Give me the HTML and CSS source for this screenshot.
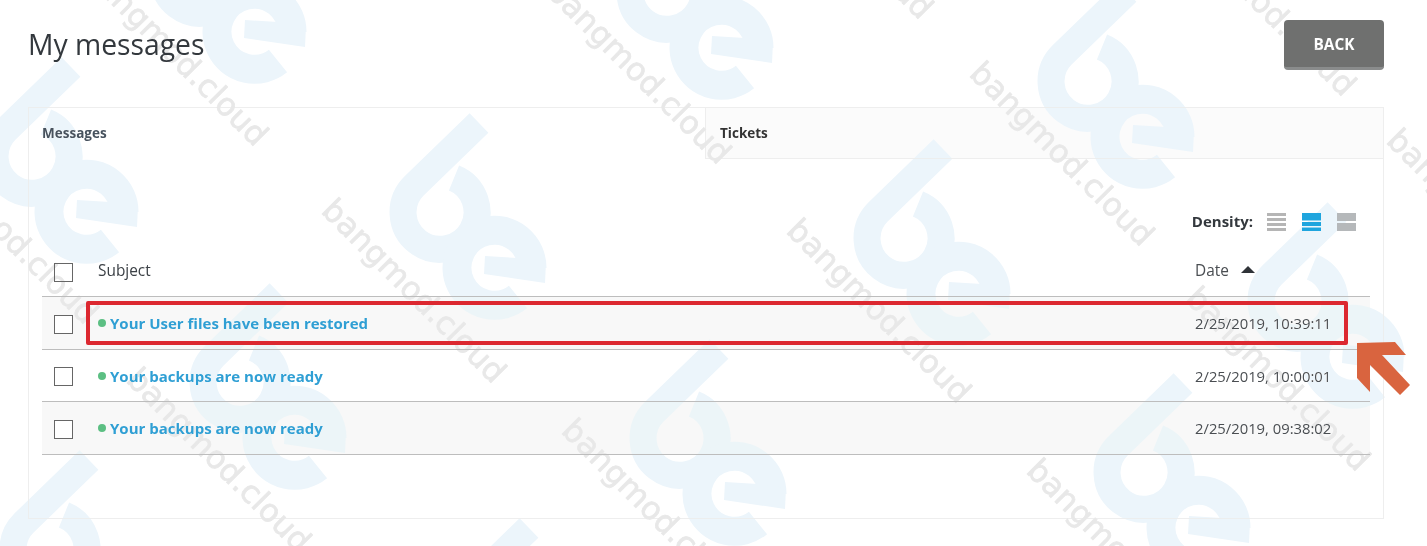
FILE: index.html
```html
<!DOCTYPE html>
<html lang="en">
<head>
<meta charset="utf-8">
<title>My messages</title>
<link rel="stylesheet" href="styles.css">
</head>
<body>
<main class="page">
  <header class="top">
    <h1 class="title">My messages</h1>
    <a class="back" href="#">BACK</a>
  </header>
  <section class="panel">
    <nav class="tabs">
      <a class="tab tab-on" href="#">Messages</a>
      <a class="tab tab-off" href="#">Tickets</a>
    </nav>
    <div class="body">
      <div class="density">
        <span class="density-label">Density:</span>
        <svg class="dicon" viewBox="0 0 19 18"><path class="d-grey" d="M0 0h19v3H0zM0 5h19v3H0zM0 10h19v3H0zM0 15h19v3H0z"/></svg>
        <svg class="dicon" viewBox="0 0 19 18"><path class="d-blue" d="M0 0h19v7.500H0zM0 9h19v4H0zM0 14.500h19v3.500H0z"/></svg>
        <svg class="dicon" viewBox="0 0 19 18"><path class="d-grey2" d="M0 0h19v8H0zM0 10h19v8H0z"/></svg>
      </div>
      <div class="row head">
        <span class="check"></span>
        <span class="subject">Subject</span>
        <span class="date">Date <i class="caret"></i></span>
      </div>
      <div class="row item odd tall">
        <span class="check"></span>
        <span class="subject"><i class="dot"></i><a class="link" href="#">Your User files have been restored</a></span>
        <span class="date">2/25/2019, 10:39:11</span>
      </div>
      <div class="row item">
        <span class="check"></span>
        <span class="subject"><i class="dot"></i><a class="link" href="#">Your backups are now ready</a></span>
        <span class="date">2/25/2019, 10:00:01</span>
      </div>
      <div class="row item odd tall">
        <span class="check"></span>
        <span class="subject"><i class="dot"></i><a class="link" href="#">Your backups are now ready</a></span>
        <span class="date">2/25/2019, 09:38:02</span>
      </div>
    </div>
  </section>
</main>

<svg class="mark" viewBox="0 0 1427 546" aria-hidden="true">
  <defs>
    <g id="logo">
      <path class="logo-b" d="M479 123L414 186A37 37 0 1 0 454 178"/>
      <path class="logo-e" d="M518 297A37.500 37.500 0 1 1 532 268"/>
      <path class="logo-fill" d="M485 256L518 258L546 262L545 283L484 274Z"/>
    </g>
  </defs>
  <use href="#logo" x="0" y="0"/>
  <use href="#logo" x="464" y="26"/>
  <use href="#logo" x="240" y="226"/>
  <use href="#logo" x="-200" y="170"/>
  <use href="#logo" x="-408" y="-56"/>
  <use href="#logo" x="-240" y="-236"/>
  <use href="#logo" x="227" y="-220"/>
  <use href="#logo" x="648" y="-131"/>
  <use href="#logo" x="858" y="89"/>
  <use href="#logo" x="704" y="260"/>
  <use href="#logo" x="-390" y="337"/>
  <use href="#logo" x="50" y="405"/>
  <g class="mark-text">
    <text transform="translate(82 -25) rotate(45)">bangmod.cloud</text>
    <text transform="translate(320 212) rotate(45)">bangmod.cloud</text>
    <text transform="translate(785 232) rotate(45)">bangmod.cloud</text>
    <text transform="translate(968 75) rotate(45)">bangmod.cloud</text>
    <text transform="translate(1184 300) rotate(45)">bangmod.cloud</text>
    <text transform="translate(560 432) rotate(45)">bangmod.cloud</text>
    <text transform="translate(1025 472) rotate(45)">bangmod.cloud</text>
    <text transform="translate(125 381) rotate(45)">bangmod.cloud</text>
    <text transform="translate(-88 153) rotate(45)">bangmod.cloud</text>
    <text transform="translate(545 -7) rotate(45)">bangmod.cloud</text>
    <text transform="translate(747 -152) rotate(45)">bangmod.cloud</text>
    <text transform="translate(1170 -75) rotate(45)">bangmod.cloud</text>
    <text transform="translate(1385 142) rotate(45)">bangmod.cloud</text>
  </g>
</svg>

<div class="callout"></div>
<svg class="arrow" viewBox="0 0 60 60" aria-hidden="true">
  <path d="M3 5L41 4L52 17L28 17L56 47L46 57L16 27L16 54L3 40Z"/>
</svg>
</body>
</html>
```
FILE: styles.css
```css
* { box-sizing: border-box; }
html, body { margin: 0; height: 100%; }
body {
  position: relative;
  width: 1427px;
  height: 546px;
  overflow: hidden;
  background: #fff;
  font-family: "Open Sans", sans-serif;
  color: #333;
}
.page { padding: 20px 43px 0 28px; }
.top {
  display: flex;
  justify-content: space-between;
  align-items: flex-start;
  height: 87px;
}
.title {
  margin: 0;
  font-size: 28.300px;
  font-weight: 400;
  line-height: 49px;
  color: #33383d;
}
.back {
  width: 100px;
  height: 50px;
  border-radius: 4px;
  border-bottom: 3px solid #8a8c8c;
  background: #6f706f;
  color: #fff;
  font-size: 15.400px;
  font-weight: 700;
  line-height: 49px;
  text-align: center;
  text-decoration: none;
}
.panel {
  height: 412px;
  border: 1px solid #eeeeee;
}
.tabs {
  display: grid;
  grid-template-columns: 676px 1fr;
  height: 50px;
}
.tab {
  padding-left: 13px;
  font-size: 13.500px;
  font-weight: 700;
  line-height: 50px;
  text-decoration: none;
  color: #333;
}
.tab-on { color: #47525e; }
.tab-off {
  padding-left: 14px;
  background: #fbfbfb;
  border-left: 1px solid #eeeeee;
  border-bottom: 1px solid #eeeeee;
}
.body { padding: 0 13px; }
.density {
  display: flex;
  justify-content: flex-end;
  align-items: center;
  gap: 16px;
  height: 24px;
  margin-top: 52px;
  padding-right: 14px;
}
.density-label {
  margin-right: -2px;
  padding-bottom: 3px;
  font-size: 15px;
  font-weight: 700;
  color: #33383d;
}
.dicon { width: 19px; height: 18px; display: block; }
.d-grey { fill: #b5b5b5; }
.d-blue { fill: #1fa5de; }
.d-grey2 { fill: #b5b8ba; }
.row {
  display: grid;
  grid-template-columns: 56px 1fr 175px;
  align-items: center;
  border-bottom: 1px solid #bdbdbd;
}
.head {
  height: 63px;
  padding-top: 25px;
  align-items: start;
  font-size: 15.400px;
  color: #3c4146;
}
.head .check { margin-top: 4px; }
.head .subject { line-height: 24px; }
.head .date { line-height: 24px; }
.item { height: 52px; font-size: 14.800px; }
.item .check { margin-top: 2px; }
.tall { height: 53px; }
.odd { background: #f8f8f8; }
.check {
  width: 19px;
  height: 19px;
  margin-left: 12px;
  border: 1px solid #666;
  background: #fff;
}
.subject { display: flex; align-items: center; }
.dot {
  width: 8px;
  height: 8px;
  margin-right: 4px;
  border-radius: 50%;
  background: #5cbf83;
}
.link {
  font-size: 15px;
  font-weight: 700;
  color: #2f9fd4;
  text-decoration: none;
}
.date { color: #4a4e52; }
.caret {
  display: inline-block;
  width: 0;
  height: 0;
  margin-left: 8px;
  vertical-align: 3px;
  border-left: 7px solid transparent;
  border-right: 7px solid transparent;
  border-bottom: 7px solid #2f3338;
}
.mark {
  position: absolute;
  left: 0;
  top: 0;
  width: 1427px;
  height: 546px;
  pointer-events: none;
  mix-blend-mode: darken;
}
.logo-b, .logo-e { fill: none; stroke: #ecf5fb; }
.logo-b { stroke-width: 27; }
.logo-e { stroke-width: 29; }
.logo-fill { fill: #ecf5fb; }
.mark-text {
  font-family: "DejaVu Sans", sans-serif;
  font-size: 31.500px;
  fill: #e8e8e8;
  stroke: #e8e8e8;
  stroke-width: 0.700px;
  stroke-linejoin: round;
}
.callout {
  position: absolute;
  left: 86px;
  top: 301px;
  width: 1262px;
  height: 44px;
  border: 4px solid #dc2830;
  border-radius: 2px;
}
.arrow {
  position: absolute;
  left: 1354px;
  top: 338px;
  width: 60px;
  height: 60px;
}
.arrow path { fill: #d9643f; }
```
